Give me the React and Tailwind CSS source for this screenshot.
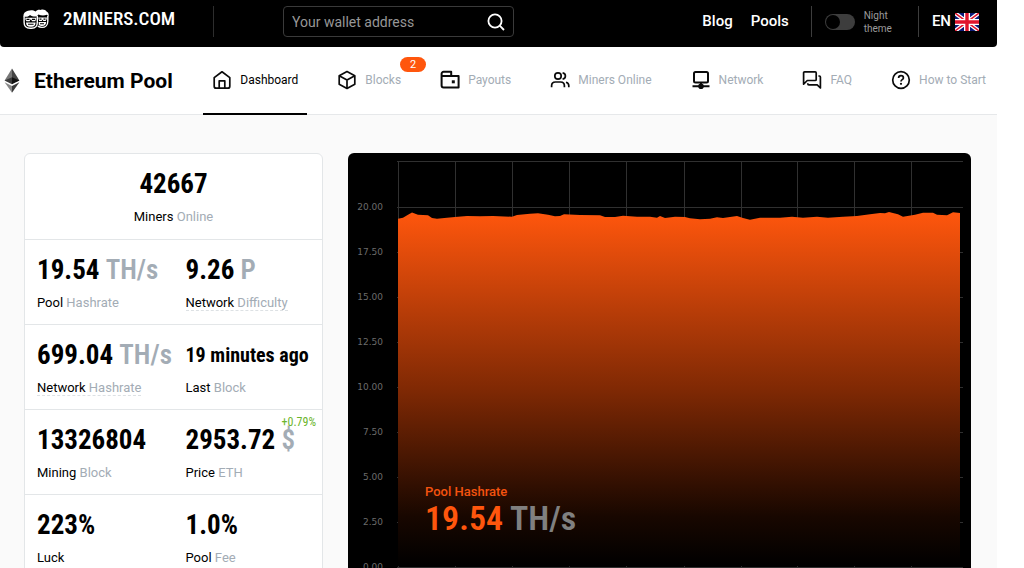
import { useState } from "react";
import clsx from "clsx";

const hashrate = [
  [1, 57.7], [6, 56.7], [11, 53.7], [15, 51.5], [21, 53.7], [31, 54.3], [35, 57], [40, 57.7],
  [50, 56.7], [58, 56], [70, 55], [83, 55.3], [96, 55], [115, 55.7], [120, 54], [133, 52.7],
  [141, 52.3], [151, 53.7], [158, 55.3], [163, 55], [167, 53.3], [183, 54], [203, 54.3], [208, 56],
  [218, 56], [226, 54.7], [240, 55.7], [253, 55.7], [260, 56.7], [263, 55], [268, 57], [278, 55.7],
  [288, 56], [293, 57.3], [303, 58.3], [313, 57.7], [320, 56.3], [326, 57], [340, 55], [346, 57],
  [353, 58.7], [363, 56.7], [383, 56.7], [395, 55.7], [406, 56.7], [420, 55.7], [431, 56.7],
  [446, 55.7], [460, 55], [473, 53.3], [483, 52], [488, 52.3], [492, 51], [501, 53.3], [506, 55.7],
  [518, 53.7], [526, 51.7], [536, 51.7], [540, 53.7], [550, 54.3], [556, 51.3], [563, 52],
];

const ticks = ["20.00", "17.50", "15.00", "12.50", "10.00", "7.50", "5.00", "2.50", "0.00"];
const columns = [1, 58, 115, 172, 229, 287, 344, 400, 457, 514];

const stats = [
  [
    { value: "19.54", unit: "TH/s", label: "Pool", sub: "Hashrate" },
    { value: "9.26", unit: "P", label: "Network", sub: "Difficulty", hint: true },
  ],
  [
    { value: "699.04", unit: "TH/s", label: "Network", sub: "Hashrate", hint: true },
    { value: "19 minutes ago", label: "Last", sub: "Block", small: true },
  ],
  [
    { value: "13326804", label: "Mining", sub: "Block" },
    { value: "2953.72", unit: "$", label: "Price", sub: "ETH", change: "+0.79%" },
  ],
  [
    { value: "223%", label: "Luck" },
    { value: "1.0%", label: "Pool", sub: "Fee" },
  ],
];

const Icon = ({ children }) => (
  <svg
    viewBox="0 0 20 20"
    className="w-5 h-5 shrink-0"
    fill="none"
    stroke="#0b0b0b"
    strokeWidth="1.7"
    strokeLinejoin="round"
    aria-hidden="true"
  >
    {children}
  </svg>
);

const links = [
  {
    name: "Dashboard",
    icon: (
      <Icon>
        <path d="M2.2 7.6 10 1.8l7.8 5.8v8.6a2 2 0 0 1-2 2H4.2a2 2 0 0 1-2-2Z" />
        <path d="M7.2 18v-7.2h5.6V18" />
      </Icon>
    ),
  },
  {
    name: "Blocks",
    badge: 2,
    icon: (
      <Icon>
        <path d="m10 1.6 7.8 4.2v8.4L10 18.4l-7.8-4.2V5.8Z" />
        <path d="M2.2 5.8 10 10l7.8-4.2M10 10v8.4" />
      </Icon>
    ),
  },
  {
    name: "Payouts",
    icon: (
      <Icon>
        <path strokeWidth="2" d="M1.6 6h17v11.6H3.6a2 2 0 0 1-2-2V3.8a2 2 0 0 1 2-2h7.600V6" />
        <path stroke="none" fill="#0b0b0b" d="M11.8 10.3h3v3h-3z" />
      </Icon>
    ),
  },
  {
    name: "Miners Online",
    icon: (
      <Icon>
        <circle cx="8" cy="6" r="3.2" />
        <path d="M1.6 17.2v-1.4c0-2.3 1.7-3.8 3.8-3.8h5.2c2.1 0 3.8 1.5 3.8 3.8v1.4M12.6 2.8c1.7.3 2.8 1.6 2.8 3.2s-1.1 2.9-2.8 3.2M16 12.2c1.6.4 2.8 1.7 2.8 3.6v1.4" />
      </Icon>
    ),
  },
  {
    name: "Network",
    icon: (
      <Icon>
        <rect x="3" y="2" width="14" height="10.4" rx="1.5" strokeWidth="2" />
        <path strokeWidth="2" d="M1.5 16.2h17M10 12.4v3" />
        <circle cx="10" cy="16.2" r="2.8" fill="#0b0b0b" stroke="none" />
      </Icon>
    ),
  },
  {
    name: "FAQ",
    icon: (
      <Icon>
        <path d="M1.6 14.2V2.9a1 1 0 0 1 1-1h10.6a1 1 0 0 1 1 1v6.6a1 1 0 0 1-1 1H5.3Z" />
        <path d="M16.4 6h1a1 1 0 0 1 1 1v11l-3.2-3.2H6.8a1 1 0 0 1-1-1v-.6" />
      </Icon>
    ),
  },
  {
    name: "How to Start",
    icon: (
      <Icon>
        <circle cx="10" cy="10" r="8.3" />
        <path d="M7.6 8.1c0-1.5 1-2.4 2.4-2.4s2.4.9 2.4 2.2c0 1.7-2.4 1.8-2.4 3.5" />
        <circle cx="10" cy="13.8" r="1.1" fill="#0b0b0b" stroke="none" />
      </Icon>
    ),
  },
];

const Logo = () => (
  <svg viewBox="0 0 26 20" className="w-[26px] h-5" aria-hidden="true">
    {/* hair */}
    <path fill="#fff" d="M.4 7.2C.3 4.400 2.200 2.400 5 1.800c2.600-1 5.400-.8 7.600.8C13.800.9 15.800.3 17.800.9c2.400-.8 4.800.2 6 1.900 1.700.7 2.300 2.700 1.700 4.800l-1.700-1.800c-2.600 1-5.600.9-8.400-.2l-1.400 1.600c-2.400.6-5 .1-7-1.300C5.600 7.600 3.400 8.400.4 7.200Z" />
    {/* faces */}
    <path
      fill="none"
      stroke="#fff"
      strokeWidth="1.4"
      d="M1.100 7v6.200c0 3.600 2.200 6 6 6h1.600c3.600 0 5.600-2.400 5.600-6V7M24.800 7v5.200c0 3.800-2.400 6.200-5.800 6.200-2 0-3-.4-4.200-1.200"
    />
    <path fill="#fff" d="M2.400 8.800h10.800v1.200l-.9 2.200H9l-.8-1.600h-.8l-.8 1.600H3.400l-1-1.800ZM15.200 8.600h8.700l-.3 1.600-.9 1.700h-2.400l-.7-1.500-.8 1.500h-2.600Z" />
    <path fill="#fff" d="M3 13.400h9.600c0 2.600-1.600 4.300-4 4.300H7c-2.400 0-4-1.700-4-4.300ZM15.600 13h7.600c-.2 2.400-1.600 4-4 4-1.400 0-2.600-.4-3.400-1Z" />
    <path fill="none" stroke="#000" strokeWidth="1.100" d="M3.500 10.400h3M9 10.400h3.200M16.500 10.100h2M20.500 10.100h2M5 15.200h5.600M17 14.800h4" />
  </svg>
);

const EthIcon = () => (
  <svg viewBox="0 0 16 26" className="w-4 h-[26px]" aria-hidden="true">
    <path fill="#777" d="M8 .5v14.7L.6 12.6Z" />
    <path fill="#444" d="M8 .5l7.4 12.1L8 15.2Z" />
    <path fill="#3b3b3b" d="M8 9.2v7L.6 12.6Z" />
    <path fill="#111" d="M8 9.2l7.4 3.4L8 16.2Z" />
    <path fill="#888" d="M.6 14.2 8 18v6.8Z" />
    <path fill="#3b3b3b" d="M15.4 14.2 8 18v6.8Z" />
  </svg>
);

const Flag = () => (
  <svg viewBox="0 0 24 18" className="w-6 h-[18px]" aria-hidden="true">
    <path fill="#0a1a78" d="M0 0h24v18H0z" />
    <path stroke="#fff" strokeWidth="4" d="m0 0 24 18M24 0 0 18" />
    <path stroke="#e0142c" strokeWidth="1.5" d="m0 0 24 18M24 0 0 18" />
    <path stroke="#fff" strokeWidth="6" d="M12 0v18M0 9h24" />
    <path stroke="#e0142c" strokeWidth="3.4" d="M12 0v18M0 9h24" />
  </svg>
);

const Header = () => {
  const [wallet, setWallet] = useState("");
  const [night, setNight] = useState(false);

  return (
    <header className="flex items-start bg-black text-white rounded-b pt-1.5 pb-2.5 pl-[23px] pr-[18px]">
      <a href="#home" className="flex items-center gap-3.5 h-[26px]">
        <Logo />
        <span className="font-['Roboto_Condensed',Roboto,sans-serif] font-medium text-[19px] leading-6 w-[108px] whitespace-nowrap">
          2MINERS.COM
        </span>
      </a>
      <div className="w-px h-[31px] bg-[#2d2d2d] ml-[42px]" />
      <form
        className="flex items-center w-[231px] h-[31px] ml-[69px] px-2 border border-[#3a3a3a] rounded"
        onSubmit={(e) => e.preventDefault()}
      >
        <input
          type="text"
          aria-label="Your wallet address"
          placeholder="Your wallet address"
          value={wallet}
          onChange={(e) => setWallet(e.target.value)}
          className="grow min-w-0 bg-transparent text-sm text-white placeholder:text-[#979797] outline-none"
        />
        <button type="submit" aria-label="Search">
          <svg viewBox="0 0 18 18" className="w-[18px] h-[18px]" fill="none" stroke="#fff" strokeWidth="1.8">
            <circle cx="8" cy="8" r="6.6" />
            <path d="m12.7 12.7 4.3 4.3" />
          </svg>
        </button>
      </form>
      <div className="flex items-center ml-auto h-[31px]">
        <a href="#blog" className="font-medium text-[15px]">Blog</a>
        <a href="#pools" className="font-medium text-[15px] ml-[18px]">Pools</a>
        <div className="w-px h-[31px] bg-[#3d3d3d] ml-[22px] mr-[13px]" />
        <label className="flex items-center gap-[9px] text-[10px] leading-[13px] text-[#9b9b9b] cursor-pointer">
          <input
            type="checkbox"
            checked={night}
            onChange={() => setNight(!night)}
            className="appearance-none w-[30px] h-4 rounded-full bg-[#3d3d3d] flex items-center px-px before:w-3.5 before:h-3.5 before:rounded-full before:bg-black checked:before:translate-x-3.5"
          />
          <span>
            Night
            <br />
            theme
          </span>
        </label>
        <div className="w-px h-[31px] bg-[#3d3d3d] ml-[26px] mr-[13px]" />
        <button type="button" className="flex items-center gap-1 font-medium text-[15px]">
          EN <Flag />
        </button>
      </div>
    </header>
  );
};

const Navbar = () => (
  <nav className="flex items-center bg-white border-b border-[#e6e8ea] pl-1 pr-0.5">
    <EthIcon />
    <h1 className="font-bold text-[21px] leading-6 ml-3.5 mr-auto whitespace-nowrap">Ethereum Pool</h1>
    <ul className="flex gap-[21px] text-xs -mb-px">
      {links.map((item, i) => (
        <li key={item.name} className="relative">
          <a
            href={`#${item.name}`}
            className={clsx(
              "flex items-center gap-2 h-[68px] px-[9px] border-b-2 whitespace-nowrap",
              i === 0 ? "text-black border-black" : "text-[#a3acb5] border-transparent"
            )}
          >
            {item.icon}
            {item.name}
          </a>
          {item.badge && (
            <span className="absolute top-2.5 -right-4 w-[26px] h-[15px] rounded-full bg-[#ff560d] text-white text-[11px] leading-[15px] text-center">
              {item.badge}
            </span>
          )}
        </li>
      ))}
    </ul>
  </nav>
);

const Stat = ({ item }) => (
  <div className="relative w-1/2 pl-3 whitespace-nowrap">
    <p
      className={clsx(
        "font-['Roboto_Condensed',Roboto,sans-serif] font-bold leading-9",
        item.small ? "text-xl" : "text-[27px]"
      )}
    >
      {item.value} {item.unit && <span className="text-[#a3acb5] font-semibold">{item.unit}</span>}
    </p>
    <p className="text-[13px] leading-4 mt-[7px]">
      <span className={clsx(item.hint && "border-b border-dashed border-[#dde1e4]")}>
        {item.label} <span className="text-[#a3acb5]">{item.sub}</span>
      </span>
    </p>
    {item.change && (
      <span className="absolute -top-2 right-1.5 font-['Roboto_Condensed',Roboto,sans-serif] text-xs text-[#6cb52d]">
        {item.change}
      </span>
    )}
  </div>
);

const Stats = () => (
  <section className="w-[299px] shrink-0 bg-white border border-[#e3e6e8] rounded-md">
    <div className="text-center pt-3 h-[85px]">
      <p className="font-['Roboto_Condensed',Roboto,sans-serif] font-bold text-[27px] leading-9">42667</p>
      <p className="text-[13px] leading-4 mt-[7px]">
        Miners <span className="text-[#a3acb5]">Online</span>
      </p>
    </div>
    {stats.map((row, i) => (
      <div key={i} className="flex pt-3 h-[85px] border-t border-[#e3e6e8]">
        {row.map((item) => (
          <Stat key={item.value} item={item} />
        ))}
      </div>
    ))}
  </section>
);

const Chart = () => {
  const line = hashrate.map(([x, y]) => `${x} ${y}`).join("L");

  return (
    <section className="relative grow min-w-0 flex bg-black rounded-md pt-2 pr-2 pb-8">
      <div className="w-[49px] shrink-0 pt-6 pr-3.5 text-right text-[9px] text-[#6b6b6b] font-['DejaVu_Sans',sans-serif]">
        {ticks.map((t) => (
          <p key={t} className="h-[45px] leading-[45px]">{t}</p>
        ))}
      </div>
      <svg viewBox="0 0 566 407" preserveAspectRatio="none" className="grow min-w-0 h-[407px]" aria-hidden="true">
        <defs>
          <linearGradient id="area" x1="0" y1="0" x2="0" y2="1">
            <stop offset="0" stopColor="#ff560d" />
            <stop offset="0.5" stopColor="#802904" />
            <stop offset="0.86" stopColor="#180700" />
            <stop offset="1" stopColor="#000" />
          </linearGradient>
        </defs>
        <g stroke="#303030">
          <path d="M0 .5h566" />
          {ticks.map((t, i) => (
            <path key={t} d={`M0 ${46.5 + i * 45}h566`} />
          ))}
          {columns.map((x) => (
            <path key={x} d={`M${x + 0.5} 0v406`} />
          ))}
        </g>
        <path fill="url(#area)" d={`M1 405L${line}V405Z`} />
      </svg>
      <div className="absolute left-[77px] top-[331px]">
        <p className="font-medium text-[13px] leading-4 text-[#f4530f]">Pool Hashrate</p>
        <p className="font-['Roboto_Condensed',Roboto,sans-serif] font-semibold text-[34px] leading-9 text-[#ff560d]">
          19.54 <span className="text-[#808080]">TH/s</span>
        </p>
      </div>
    </section>
  );
};

const App = () => {
  return (
    <div className="min-h-screen bg-white pr-[27px] font-[Roboto,sans-serif] text-black">
      <Header />
      <Navbar />
      <main className="flex items-start gap-[25px] bg-[#fafafa] pt-[38px] pb-10 pl-6 pr-[26px]">
        <Stats />
        <Chart />
      </main>
    </div>
  );
};

export default App;
